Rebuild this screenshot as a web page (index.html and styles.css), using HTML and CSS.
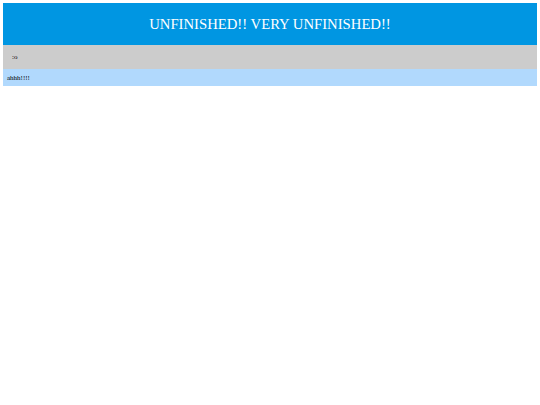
FILE: index.html
```html
<!DOCTYPE html>
<html lang="en">

<head>
    <meta charset="UTF-8">
    <meta name="viewport" content="width=device-width, initial-scale=1.0">
    <title>Unfinished</title>
    <link rel="stylesheet" href="styles.css">
</head>

<body>

    <header class="banner">
        <h1>UNFINISHED!! VERY UNFINISHED!!</h1>
    </header>

    <div class="subbar">
        <p>:o</p>
    </div>

    <div class="notice">
        <p>ahhh!!!!</p>
    </div>

</body>

</html>
```

FILE: styles.css
```css
body {
    font-family: "Liberation Serif", "Times New Roman", serif;
    margin: 3px;
    padding: 0;
    background-color: #ffffff;
}

.banner {
    background-color: #0096e2;
    height: 42px;
    display: flex;
    align-items: center;
    justify-content: center;
}

.banner h1 {
    margin: 0;
    color: #ffffff;
    font-weight: normal;
    font-size: 14.7px;
}

.subbar {
    background-color: #cccccc;
    height: 24px;
    display: flex;
    align-items: center;
    padding-left: 9px;
}

.subbar p {
    margin: 0;
    font-size: 7px;
}

.notice {
    background-color: #b1d9fd;
    height: 17px;
    display: flex;
    align-items: center;
    padding-left: 4px;
}

.notice p {
    margin: 0;
    font-size: 7px;
}
```
